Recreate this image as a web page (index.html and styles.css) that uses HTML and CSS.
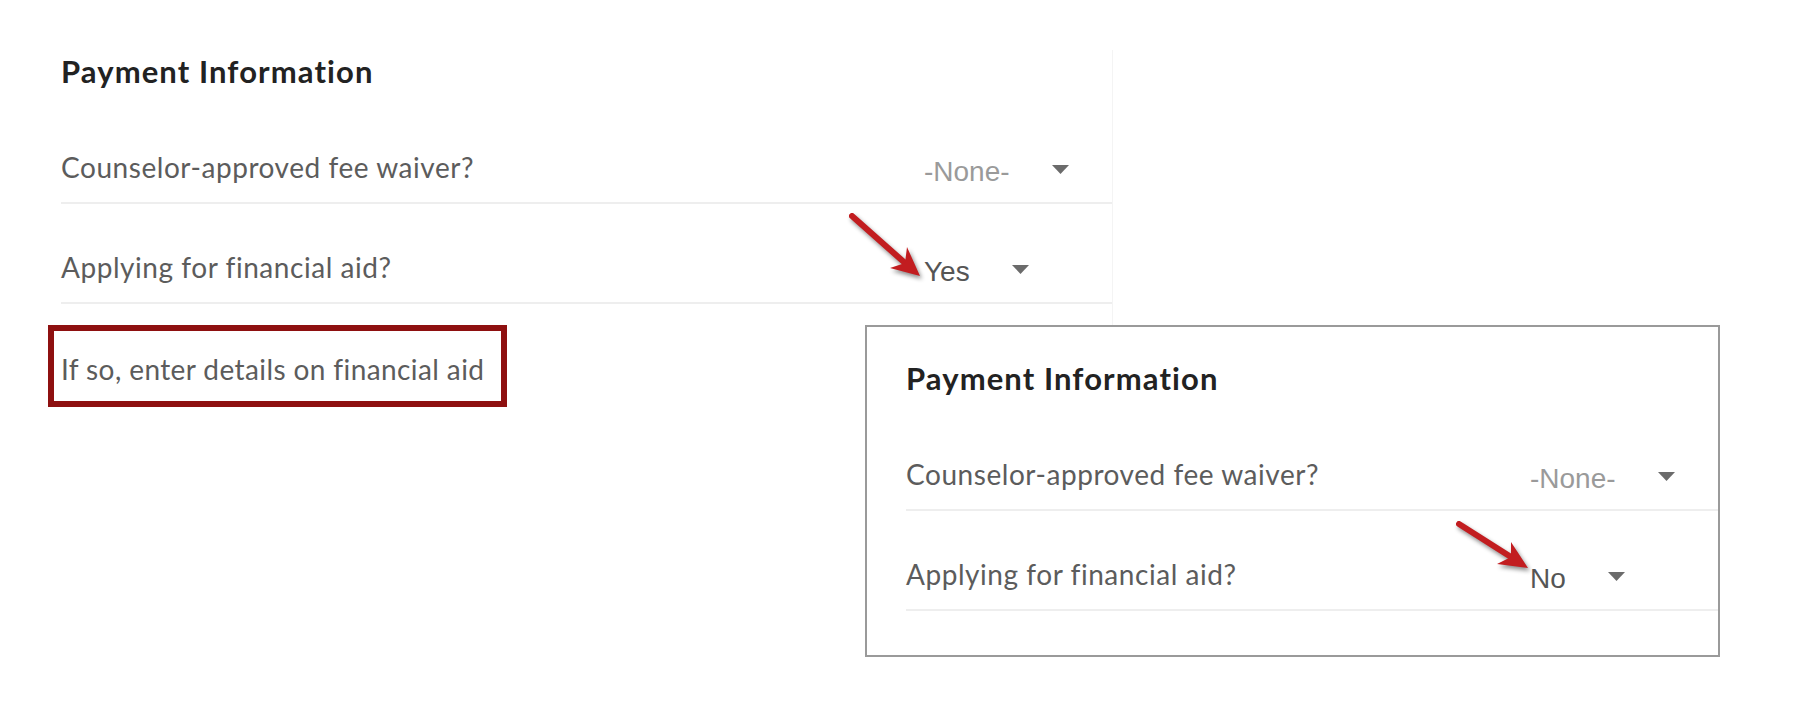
FILE: index.html
```html
<!DOCTYPE html>
<html lang="en">
<head>
    <meta charset="UTF-8">
    <meta name="viewport" content="width=device-width, initial-scale=1.0">
    <title>Payment Information</title>
    <link rel="stylesheet" href="styles.css">
</head>
<body>
    <!-- Form with "Yes" selected -->
    <div class="panel panel-plain">
        <h2>Payment Information</h2>
        <div class="field-row">
            <span class="field-label">Counselor-approved fee waiver?</span>
            <span class="select is-empty">-None-<svg class="caret" width="17" height="9" viewBox="0 0 17 9"><path d="M0 0H17L8.5 9Z"/></svg></span>
        </div>
        <div class="field-row">
            <span class="field-label">Applying for financial aid?</span>
            <span class="select">Yes<svg class="caret" width="17" height="9" viewBox="0 0 17 9"><path d="M0 0H17L8.5 9Z"/></svg></span>
            <svg class="arrow arrow-yes" width="90" height="80" viewBox="0 0 90 80">
                <line x1="7" y1="7" x2="60" y2="54"/>
                <polygon points="75,67 45,59 60,54 62,38"/>
            </svg>
        </div>
    </div>

    <div class="lower">
        <div class="highlight">If so, enter details on financial aid</div>

        <!-- Form with "No" selected -->
        <div class="panel panel-boxed">
            <h2>Payment Information</h2>
            <div class="field-row">
                <span class="field-label">Counselor-approved fee waiver?</span>
                <span class="select is-empty">-None-<svg class="caret" width="17" height="9" viewBox="0 0 17 9"><path d="M0 0H17L8.5 9Z"/></svg></span>
            </div>
            <div class="field-row">
                <span class="field-label">Applying for financial aid?</span>
                <span class="select">No<svg class="caret" width="17" height="9" viewBox="0 0 17 9"><path d="M0 0H17L8.5 9Z"/></svg></span>
                <svg class="arrow arrow-no" width="90" height="80" viewBox="0 0 90 80">
                    <line x1="8" y1="9" x2="60" y2="42"/>
                    <polygon points="77,53 46,49 60,42 60,27"/>
                </svg>
            </div>
        </div>
    </div>
</body>
</html>
```

FILE: styles.css
```css
body {
    margin: 0;
    font-family: Lato, "Open Sans", Arial, sans-serif;
    background: #fff;
    color: #5c5c5c;
}
.panel h2 {
    margin: 0;
    padding-bottom: 18px;
    font-size: 31px;
    line-height: 30px;
    font-weight: 700;
    letter-spacing: 1.1px;
    color: #222;
}
.panel-plain {
    margin: 50px 0 0 61px;
    width: 1051px;
    padding: 6px 0 21px;
    border-right: 1px solid #f4f4f4;
}
.field-row {
    position: relative;
    display: grid;
    grid-template-columns: 1fr 188px;
    align-items: end;
    height: 100px;
    box-sizing: border-box;
    border-bottom: 2px solid #eeeeee;
}
.field-label {
    font-size: 28px;
    line-height: 28px;
    letter-spacing: 0.55px;
    padding-bottom: 21px;
}
.select {
    font-family: "Liberation Sans", Arial, sans-serif;
    font-size: 28px;
    line-height: 28px;
    padding-bottom: 16px;
    color: #555;
}
.select.is-empty {
    color: #9a9a9a;
}
.caret {
    margin-left: 42px;
    vertical-align: 7px;
    fill: #6b6b6b;
}
.arrow {
    position: absolute;
    right: 177px;
    top: 5px;
    overflow: visible;
    filter: drop-shadow(2px 3px 2px rgba(0, 0, 0, 0.45));
}
.arrow line {
    stroke: #c21d20;
    stroke-width: 6;
    stroke-linecap: round;
}
.arrow polygon {
    fill: #c21d20;
}
.arrow-no {
    top: 4px;
}
.lower {
    display: flex;
    align-items: flex-start;
}
.highlight {
    margin-left: 48px;
    width: 459px;
    height: 82px;
    box-sizing: border-box;
    border: 6px solid #8e1010;
    padding: 24px 0 0 7px;
    font-size: 28px;
    line-height: 28px;
    letter-spacing: 0.4px;
}
.panel-boxed {
    margin-left: 358px;
    width: 855px;
    height: 332px;
    box-sizing: border-box;
    border: 2px solid #9a9a9a;
    padding: 36px 0 0 39px;
}
```
